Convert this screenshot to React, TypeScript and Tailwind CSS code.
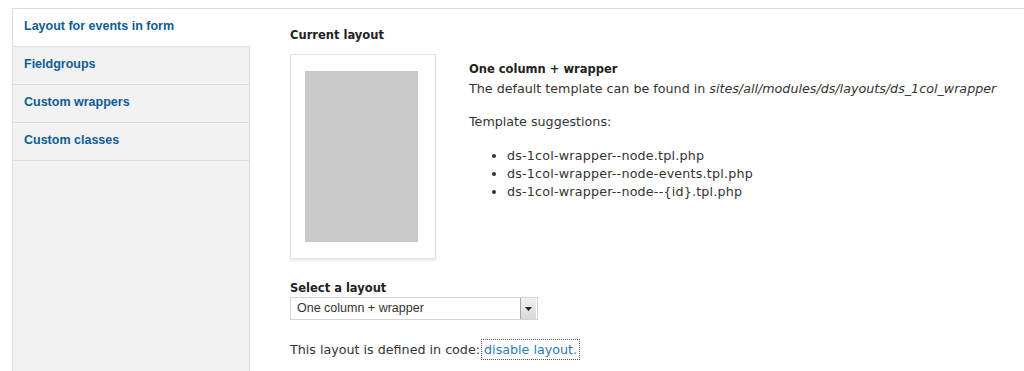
import React from 'react';

const tabs = ['Layout for events in form', 'Fieldgroups', 'Custom wrappers', 'Custom classes'];

const suggestions = [
  'ds-1col-wrapper--node.tpl.php',
  'ds-1col-wrapper--node-events.tpl.php',
  'ds-1col-wrapper--node--{id}.tpl.php',
];

export default function App() {
  return (
    <div className="w-[1024px] h-[371px] overflow-hidden bg-white pt-2 pl-3 text-[12.7px] text-[#333] font-['DejaVu_Sans',sans-serif]">
      <div className="flex h-full border-t border-[#dcdcdc]">
        {/* Vertical tabs */}
        <ul className="w-[238px] shrink-0 bg-[#f2f2f2] border-l border-[#dcdcdc]">
          {tabs.map((tab, i) => (
            <li
              key={tab}
              className={`h-[38px] flex items-center pl-[11px] pb-[2px] border-b border-[#dcdcdc] ${
                i === 0 ? 'bg-white' : 'border-r'
              }`}
            >
              <a className="font-bold text-[#0f5c94] text-[12.5px] font-['Liberation_Sans',sans-serif]">{tab}</a>
            </li>
          ))}
          <li className="h-full border-r border-[#dcdcdc]" />
        </ul>

        {/* Layout settings */}
        <div className="flex-1 pl-[40px] pt-[17px]">
          <h3 className="font-bold text-[11.5px] text-[#222] leading-[18px]">Current layout</h3>
          <div className="flex mt-[10px]">
            <div className="w-[146px] h-[205px] shrink-0 border border-[#e2e2e2] bg-white shadow-[0_2px_2px_rgba(0,0,0,0.08)] px-[14px] pt-[16px]">
              <div className="w-[113px] h-[171px] bg-[#c9c9c9]" />
            </div>
            <div className="ml-[33px] pt-[6px]">
              <div className="font-bold text-[11.5px] text-[#222] leading-[18px]">One column + wrapper</div>
              <div className="leading-[18px] mt-[2px]">
                The default template can be found in{' '}
                <em>sites/all/modules/ds/layouts/ds_1col_wrapper</em>
              </div>
              <p className="mt-[15px] leading-[18px]">Template suggestions:</p>
              <ul className="mt-[16px] pl-[38px] list-disc">
                {suggestions.map((s) => (
                  <li key={s} className="leading-[18px] tracking-[0.2px]">{s}</li>
                ))}
              </ul>
            </div>
          </div>

          <div className="mt-[20px] font-bold text-[11.5px] text-[#222] leading-[18px]">Select a layout</div>
          <div className="flex w-[248px] h-[23px] border border-[#d4d4d4] bg-white">
            <span className="flex-1 pl-[6px] leading-[21px] text-[12.5px] text-[#333] font-['Liberation_Sans',sans-serif]">
              One column + wrapper
            </span>
            <span className="w-[16px] h-[21px] mr-[1px] flex items-center justify-center bg-gradient-to-b from-[#f2f2f2] to-[#d8d8d8] border-l border-[#a8a8a8]">
              <svg width="7" height="4" viewBox="0 0 7 4">
                <path d="M0 0h7L3.5 4z" fill="#222" />
              </svg>
            </span>
          </div>

          <p className="mt-[21px] leading-[18px]">
            This layout is defined in code:{' '}
            <a className="text-[#2a7ab8] outline-1 outline-dotted outline-[#555] outline-offset-2">disable layout.</a>
          </p>
        </div>
      </div>
    </div>
  );
}
